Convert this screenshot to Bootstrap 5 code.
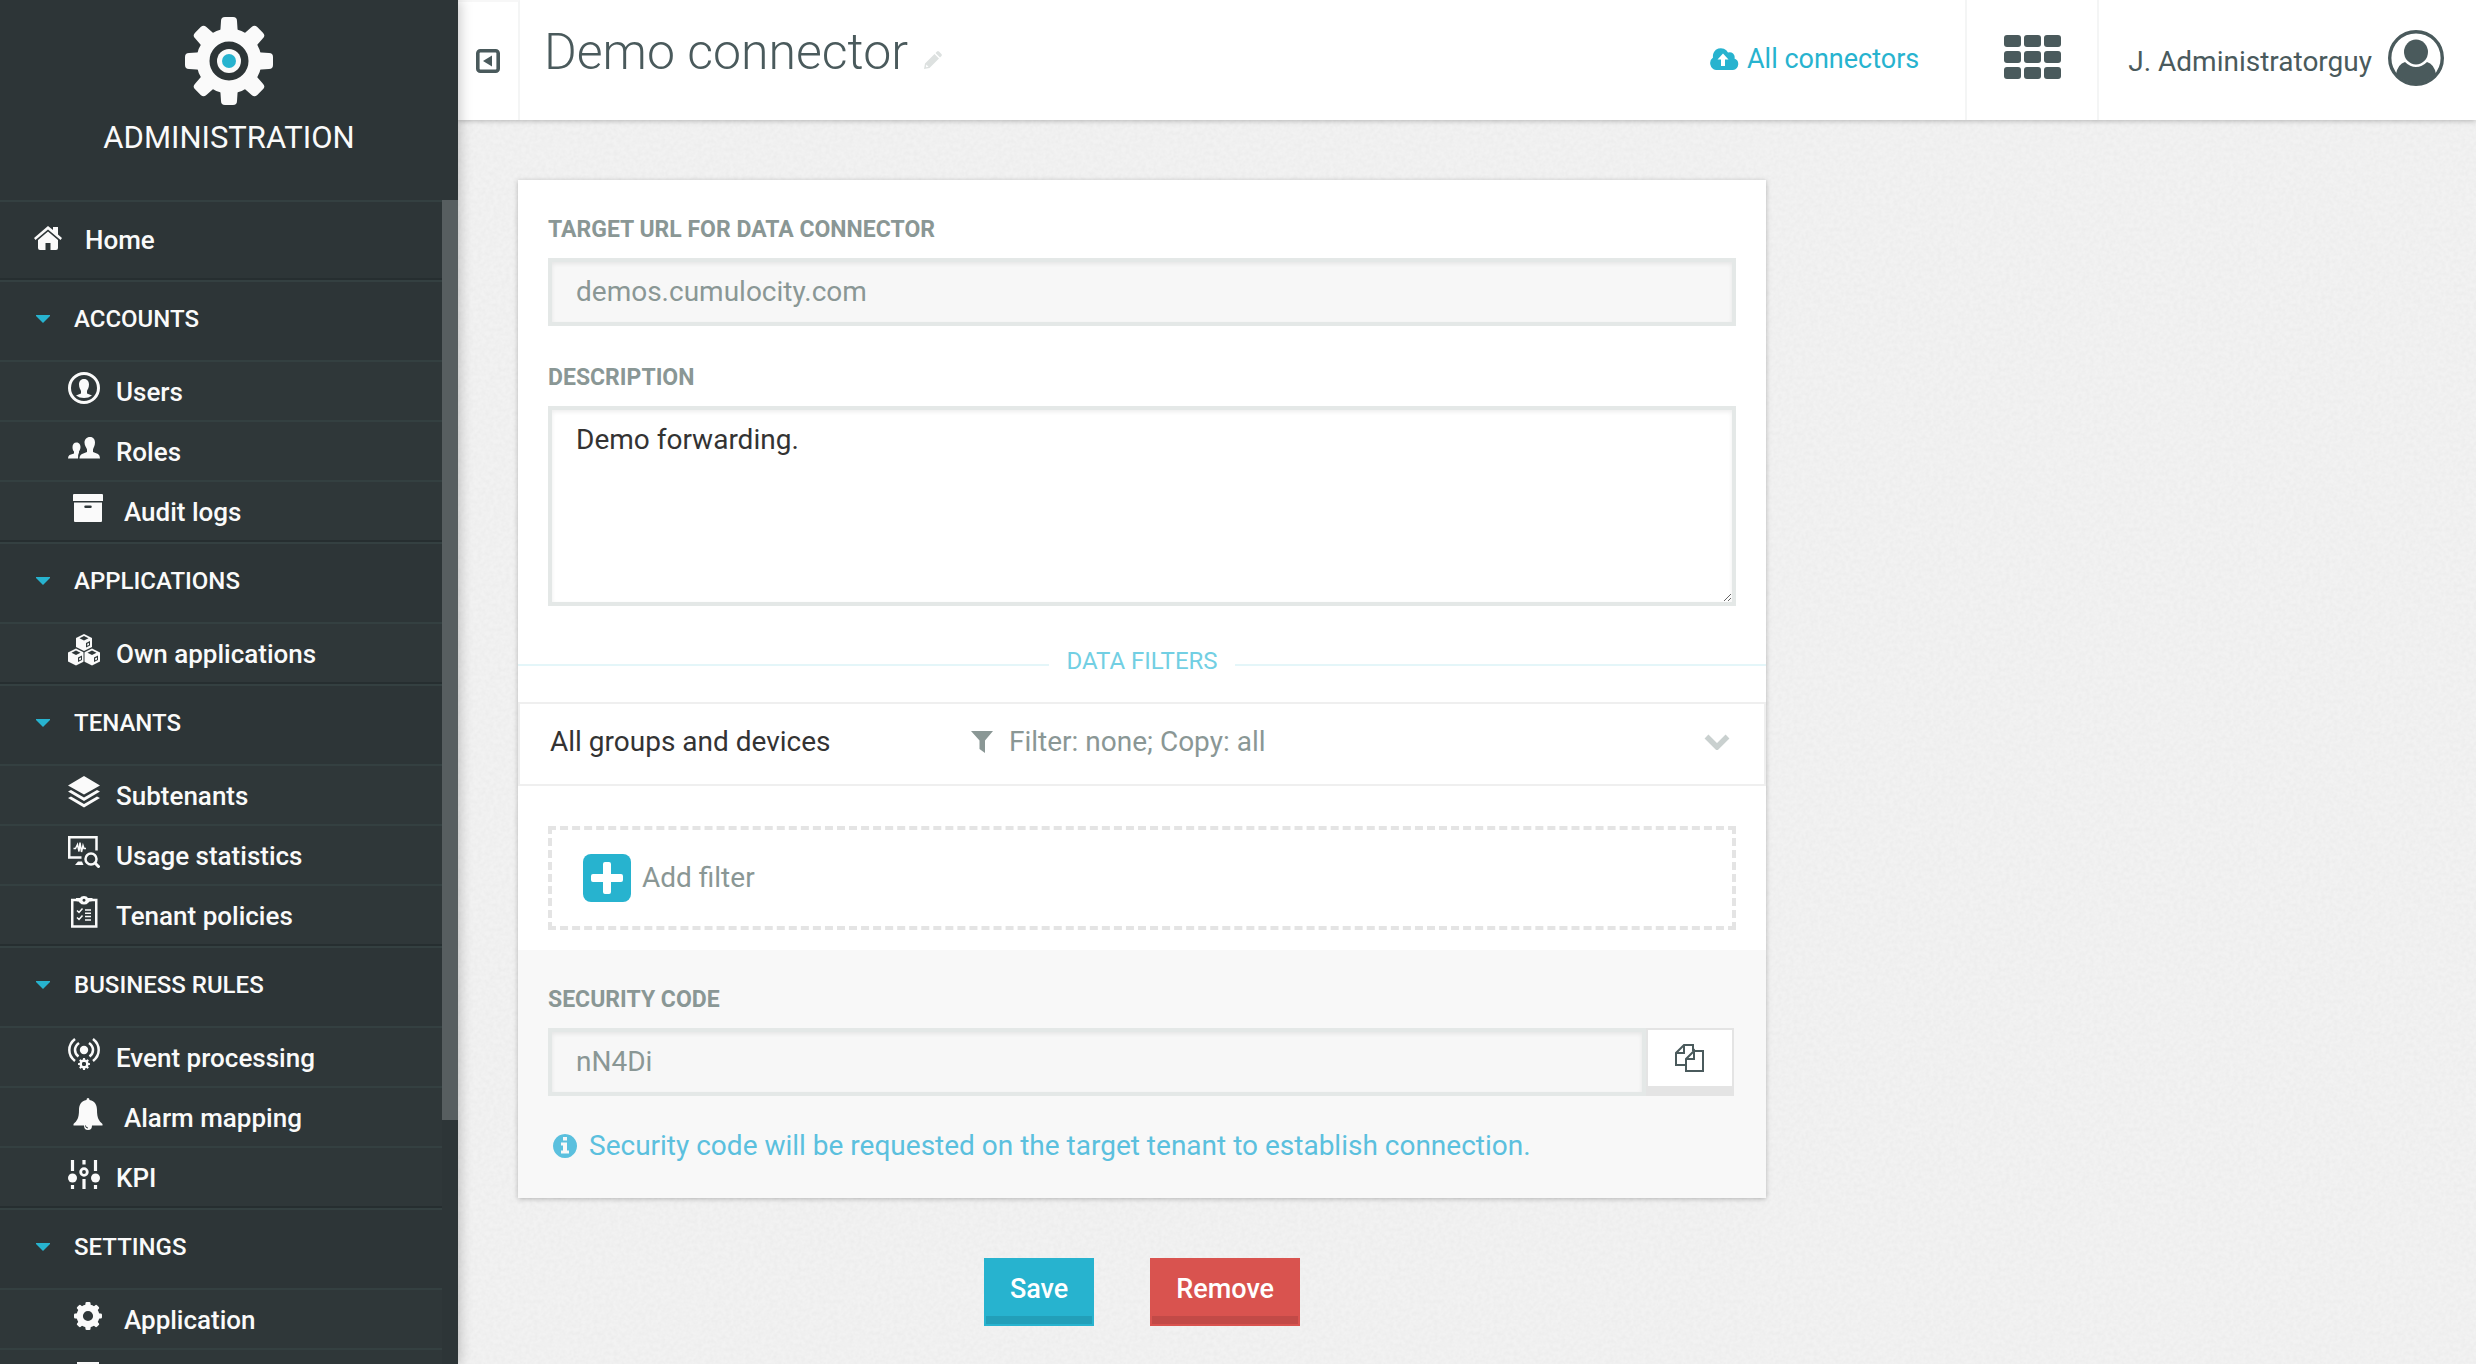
<!DOCTYPE html>
<html lang="en">
<head>
<meta charset="utf-8">
<meta name="viewport" content="width=device-width, initial-scale=1">
<title>Demo connector - Administration</title>
<link href="https://cdn.jsdelivr.net/npm/bootstrap@5.3.0/dist/css/bootstrap.min.css" rel="stylesheet">
<style>
  :root { --brand: #27b3cf; --ink: #4a5a5c; --muted: #8a9795; --edge: #e4e8e7; }
  body { font-family: Roboto, "Liberation Sans", sans-serif; font-size: 28px; line-height: 40px; color: #333; background: #f1f1f1; }
  svg { flex: none; display: block; }
  svg:not([fill]) { fill: currentColor; }
  a { text-decoration: none; }

  /* sidebar */
  .side { width: 458px; background: #2d3537; color: #fafafa; box-shadow: 2px 0 12px rgba(0,0,0,.22); z-index: 3; }
  .side a, .side button { color: inherit; }
  .side-brand { height: 200px; padding-top: 17px; font-size: 31px; }
  .side-brand span { line-height: 40px; margin-top: 13px; }
  .side-nav { font-size: 26px; font-weight: 500; min-width: 0; }
  .nav-home { height: 80px; padding: 0 0 0 34px; gap: 23px; border-top: 2px solid #344041; border-bottom: 2px solid #262e30; }
  .nav-home svg { margin-bottom: 4px; }
  .nav-group { border-bottom: 2px solid #262e30; }
  .nav-head { height: 80px; padding: 0 0 5px 36px; gap: 24px; font-size: 24px; text-transform: uppercase; border: 0; border-top: 2px solid #344041; background: none; width: 100%; font-weight: 500; }
  .nav-item-row { height: 60px; padding: 2px 0 0 68px; gap: 16px; background: #2f3739; border-top: 2px solid #344041; }
  .nav-item-row svg { margin-bottom: 8px; }
  .scroll-track { width: 16px; flex: none; }
  .scroll-thumb { height: 79%; background: #575e60; }

  /* top bar */
  .topbar { height: 120px; background: #fff; color: var(--ink); box-shadow: 0 1px 5px rgba(0,0,0,.25); z-index: 2; }
  .collapse-btn { width: 62px; border: 0; border-right: 2px solid #f4f5f5; border-top: 2px solid #f7f7f7; background: none; color: var(--ink); }
  .page-title { font-size: 50px; font-weight: 300; line-height: 60px; }
  .plain-btn { border: 0; background: none; padding: 0; color: inherit; }
  .topbar .link-all { color: var(--brand); padding-right: 46px; padding-bottom: 2px; font-size: 27px; }
  .apps-btn { width: 134px; border: 0; border-left: 2px solid #f4f5f5; border-right: 2px solid #f4f5f5; background: none; color: var(--ink); padding-bottom: 8px; }
  .user-box { padding: 0 32px 0 29px; color: var(--ink); }

  /* content */
  .work { background-color: #f2f2f2; background-image: url("data:image/svg+xml,%3Csvg xmlns='http://www.w3.org/2000/svg' width='300' height='300'%3E%3Cfilter id='n'%3E%3CfeTurbulence type='fractalNoise' baseFrequency='.25' numOctaves='2' stitchTiles='stitch'/%3E%3CfeColorMatrix values='0 0 0 0 0 0 0 0 0 0 0 0 0 0 0 .04 0 0 0 -.012'/%3E%3C/filter%3E%3Crect width='300' height='300' filter='url(%23n)'/%3E%3C/svg%3E"); padding: 60px 26px 0 30px; }
  .work .row { --bs-gutter-x: 60px; margin: 0; }
  .panel { background: #fff; box-shadow: 0 1px 5px rgba(0,0,0,.25); }
  .panel-sec { padding: 36px 30px 0; }
  .panel-foot { background: #f8f8f8; padding: 36px 30px 32px; margin-top: 20px; }
  .cap-label { display: block; font-size: 23px; line-height: 28px; font-weight: 700; color: var(--muted); text-transform: uppercase; margin-bottom: 14px; }
  .box-input + .cap-label { margin-top: 38px; }
  .box-input { border: 4px solid var(--edge); border-radius: 0; height: 68px; padding: 0 24px 2px; font-size: 28px; box-shadow: inset 0 2px 4px rgba(0,0,0,.07); color: #333; }
  .box-input:read-only { background: #f7f7f7; color: var(--muted); }
  textarea.box-input { height: 200px; padding: 10px 24px; line-height: 40px; resize: vertical; }
  .rule-title { margin-top: 41px; margin-bottom: 27px; gap: 17px; line-height: 28px; font-size: 24px; color: #72cfe3; }
  .rule-title::before, .rule-title::after { content: ""; flex: 1; height: 2px; margin-top: 8px; background: #e4f6f9; }
  .filter-row { width: 100%; height: 84px; border: 2px solid #efefef; background: #fff; padding: 0 34px 4px 30px; color: #333; text-align: left; }
  .filter-row .name { width: 421px; }
  .filter-row .info { color: var(--muted); }
  .add-zone { height: 104px; border: 4px dashed #e4e4e4; background: #fff; margin: 40px 30px 0; padding: 0 31px; }
  .add-zone button { gap: 11px; color: var(--muted); }
  .plus { width: 48px; height: 48px; border-radius: 8px; background: var(--brand); color: #fff; }
  .copy-btn { width: 88px; margin-right: 2px; border: 2px solid #e4e4e4; border-bottom-width: 10px; background: #fff; color: var(--ink); padding: 0; }
  .hint { margin-top: 30px; padding-left: 5px; gap: 12px; color: #5bc0de; }
  .form-actions { gap: 56px; margin-top: 60px; }
  .act { height: 68px; border: 2px solid; border-radius: 0; padding: 0 24px 6px; font-size: 27px; line-height: 48px; font-weight: 500; color: #fff; }
  .act-save { background: var(--brand); border-color: var(--brand); box-shadow: inset 0 -8px #229fb9; }
  .act-remove { background: #d9534f; border-color: #d9534f; box-shadow: inset 0 -8px #c24a47; }
  .act:hover { color: #fff; }
</style>
</head>
<body>
<svg width="0" height="0" class="position-absolute" aria-hidden="true">
  <defs>
    <path id="tooth" d="M-9 -25 L-8 -40 Q-8 -44 -4 -44 H4 Q8 -44 8 -40 L9 -25 Z"/>
    <g id="teeth">
      <use href="#tooth"/><use href="#tooth" transform="rotate(45)"/><use href="#tooth" transform="rotate(90)"/><use href="#tooth" transform="rotate(135)"/>
      <use href="#tooth" transform="rotate(180)"/><use href="#tooth" transform="rotate(225)"/><use href="#tooth" transform="rotate(270)"/><use href="#tooth" transform="rotate(315)"/>
    </g>
    <g id="cube">
      <path d="M8 0 L16 4 V13 L8 17 L0 13 V4 Z"/>
      <path d="M8 2 L12.500 4.300 L8 6.500 L3.500 4.300 Z M10 9 L14 7 V11.500 L10 13.500 Z" fill="#2f3739"/>
      <path d="M11.200 9.800 L13 8.900 V10.900 L11.200 11.800 Z"/>
    </g>
  </defs>
</svg>

<div class="d-flex vh-100 overflow-hidden">
  <aside class="side d-flex flex-column flex-shrink-0">
    <div class="side-brand d-flex flex-column align-items-center flex-shrink-0">
      <svg width="88" height="88" viewBox="-44 -44 88 88"><use href="#teeth"/><circle r="26" fill="none" stroke="currentColor" stroke-width="13"/><circle r="12"/><circle r="7" fill="#27b3cf"/></svg>
      <span>ADMINISTRATION</span>
    </div>
    <div class="d-flex flex-grow-1 overflow-hidden">
      <nav class="side-nav flex-grow-1" aria-label="Main">
        <a href="#" class="nav-home d-flex align-items-center">
          <svg width="28" height="24" viewBox="0 0 28 24"><path d="M14 0 L19 4 V1 H24 V8.500 L28 12 L26.500 14 L14 3.600 L1.500 14 L0 12 Z"/><path d="M14 5.500 L24 14 V22 Q24 24 22 24 H16.500 V17 H11.500 V24 H6 Q4 24 4 22 V14 Z"/></svg>
          <span>Home</span>
        </a>

        <div class="nav-group">
          <button type="button" class="nav-head d-flex align-items-center"><svg width="14" height="8" viewBox="0 0 14 8" fill="#27b3cf"><path d="M0 0 H14 V1 L7 8 L0 1 Z"/></svg><span>Accounts</span></button>
          <a href="#" class="nav-item-row d-flex align-items-center">
            <svg width="32" height="32" viewBox="0 0 32 32"><circle cx="16" cy="16" r="14.500" fill="none" stroke="currentColor" stroke-width="3"/><path d="M16 7 C19.500 7 21 9.500 21 12.500 C21 16 19.500 17.500 19 19 V21.500 L24 23.500 Q20.500 26 16 26 Q11.500 26 8 23.500 L13 21.500 V19 C12.500 17.500 11 16 11 12.500 C11 9.500 12.500 7 16 7 Z"/></svg><span>Users</span></a>
          <a href="#" class="nav-item-row d-flex align-items-center">
            <svg width="32" height="32" viewBox="0 0 32 32"><path d="M22 5 C25.500 5 27 7.500 27 10.500 C27 14 25.500 15.500 25 17.500 V20 L30 22 Q32 23 32 26.500 H11.500 Q11.500 23 14 22 L19 20 V17.500 C18.500 15.500 16.500 14 16.500 10.500 C16.500 7.500 18.500 5 22 5 Z M8.500 10.500 C11.500 10.500 12.500 13 12.500 15 C12.500 17 11.500 18.500 11 19.500 V20.500 Q10 22 10 26.500 H0 Q0 24 1.500 23 L6 21.500 V19.500 C5 18.500 4.500 17 4.500 15 C4.500 12.500 6 10.500 8.500 10.500 Z"/></svg><span>Roles</span></a>
          <a href="#" class="nav-item-row d-flex align-items-center">
            <svg width="40" height="32" viewBox="0 0 40 32"><path fill-rule="evenodd" d="M6 2 H34 Q35 2 35 3 V9 H5 V3 Q5 2 6 2 Z M6 10.500 H34 V29 Q34 30 33 30 H7 Q6 30 6 29 Z M17.500 13.500 a1 1 0 0 0 0 2.500 H22.500 a1 1 0 0 0 0 -2.500 Z"/></svg><span>Audit logs</span></a>
        </div>

        <div class="nav-group">
          <button type="button" class="nav-head d-flex align-items-center"><svg width="14" height="8" viewBox="0 0 14 8" fill="#27b3cf"><path d="M0 0 H14 V1 L7 8 L0 1 Z"/></svg><span>Applications</span></button>
          <a href="#" class="nav-item-row d-flex align-items-center">
            <svg width="32" height="32" viewBox="0 0 32 32"><use href="#cube" x="8" y="0"/><use href="#cube" x="0" y="14.500"/><use href="#cube" x="16" y="14.500"/><path d="M16 18 V30" stroke="#2f3739" stroke-width="1"/></svg><span>Own applications</span></a>
        </div>

        <div class="nav-group">
          <button type="button" class="nav-head d-flex align-items-center"><svg width="14" height="8" viewBox="0 0 14 8" fill="#27b3cf"><path d="M0 0 H14 V1 L7 8 L0 1 Z"/></svg><span>Tenants</span></button>
          <a href="#" class="nav-item-row d-flex align-items-center">
            <svg width="32" height="32" viewBox="0 0 32 32"><path d="M16 0 L32 9.500 L16 18.500 L0 9.500 Z M0 15.500 L3 14 L16 21.500 L29 14 L32 15.500 L16 25 Z M0 22 L3 20.500 L16 28 L29 20.500 L32 22 L16 31.500 Z"/></svg><span>Subtenants</span></a>
          <a href="#" class="nav-item-row d-flex align-items-center">
            <svg width="32" height="32" viewBox="0 0 32 32"><g fill="none" stroke="currentColor" stroke-width="2.500"><path d="M13.500 21.500 H1.250 V1.250 H28.500 V14.500"/><circle cx="23" cy="23" r="5.500"/><path d="M27 27 L31.500 31.500" stroke-width="3"/><path d="M5.500 12.500 H7.500 L9.500 8.500 L11 15.500 L12 6.500 L13.500 16 L15 9.500 L16 12.500 H18" stroke-width="1.500"/></g><path d="M10 25.500 H14 L15.500 29 H7 Z"/></svg><span>Usage statistics</span></a>
          <a href="#" class="nav-item-row d-flex align-items-center">
            <svg width="32" height="32" viewBox="0 0 32 32"><path fill="none" stroke="currentColor" stroke-width="2.500" d="M10 4 H4.250 V30.500 H28.250 V4 H22"/><path fill-rule="evenodd" d="M8 2 H12 Q13 0 16 0 Q19 0 20 2 H24.500 V5 Q21 5 20 7 Q19 8.500 16 8.500 Q13 8.500 12 7 Q11 5 8 5 Z M16 2.800 a1.500 1.500 0 1 0 .01 0 Z"/><path fill="none" stroke="currentColor" stroke-width="1.500" d="M9 14.500 L11 16.500 L14.500 12.500 M9 21.500 L11 23.500 L14.500 19.500 M17 14 H23 M17 17.300 H23 M17 20.600 H23 M17 24 H23"/></svg><span>Tenant policies</span></a>
        </div>

        <div class="nav-group">
          <button type="button" class="nav-head d-flex align-items-center"><svg width="14" height="8" viewBox="0 0 14 8" fill="#27b3cf"><path d="M0 0 H14 V1 L7 8 L0 1 Z"/></svg><span>Business rules</span></button>
          <a href="#" class="nav-item-row d-flex align-items-center">
            <svg width="32" height="32" viewBox="0 0 32 32"><circle cx="16" cy="12" r="4.200"/><g fill="none" stroke="currentColor" stroke-width="2.500"><path d="M7 1 Q1.300 5.500 1.300 12 Q1.300 18.500 7 23 M25 1 Q30.700 5.500 30.700 12 Q30.700 18.500 25 23 M11 5 Q7 8 7 12 Q7 16 10.500 18.500 M21 5 Q25 8 25 12 Q25 16 21.500 18.500"/></g><g transform="translate(16 26) scale(.136)"><use href="#teeth"/><circle r="24" fill="none" stroke="currentColor" stroke-width="18"/></g><circle cx="16" cy="26" r="2" fill="#2f3739"/></svg><span>Event processing</span></a>
          <a href="#" class="nav-item-row d-flex align-items-center">
            <svg width="40" height="32" viewBox="0 0 40 32"><path d="M20 0 Q21.500 0 21.500 2 C27 3 29 7 29 12 C29 20 31 23 34.500 26 V27.500 H24 Q24 32 20 32 Q16 32 16 27.500 H5.500 V26 C9 23 11 20 11 12 C11 7 13 3 18.500 2 Q18.500 0 20 0 Z"/><path d="M17.500 27.500 Q17.500 30 20 30" fill="none" stroke="#2f3739"/></svg><span>Alarm mapping</span></a>
          <a href="#" class="nav-item-row d-flex align-items-center">
            <svg width="32" height="32" viewBox="0 0 32 32"><circle cx="4.500" cy="20" r="4.500"/><circle cx="27.500" cy="20" r="4.500"/><circle cx="16" cy="14" r="3.300" fill="none" stroke="currentColor" stroke-width="2.800"/><path d="M4.500 2 V13 M4.500 27 V31 M27.500 2 V13 M27.500 27 V31 M16 2 V6.500 M16 21 V31" stroke="currentColor" stroke-width="3.200"/></svg><span>KPI</span></a>
        </div>

        <div class="nav-group">
          <button type="button" class="nav-head d-flex align-items-center"><svg width="14" height="8" viewBox="0 0 14 8" fill="#27b3cf"><path d="M0 0 H14 V1 L7 8 L0 1 Z"/></svg><span>Settings</span></button>
          <a href="#" class="nav-item-row d-flex align-items-center">
            <svg width="40" height="32" viewBox="0 0 40 32"><g transform="translate(20 16) scale(.318)"><use href="#teeth"/><circle r="26" fill="none" stroke="currentColor" stroke-width="20"/></g></svg><span>Application</span></a>
          <a href="#" class="nav-item-row d-flex align-items-center" aria-label="More settings">
            <svg width="40" height="32" viewBox="0 0 40 32"><path d="M9 2 H31 V30 H9 Z"/></svg></a>
        </div>
      </nav>
      <div class="scroll-track"><div class="scroll-thumb"></div></div>
    </div>
  </aside>

  <div class="d-flex flex-column flex-grow-1">
    <header class="topbar d-flex flex-shrink-0">
      <button type="button" class="collapse-btn d-flex align-items-center justify-content-center p-0" aria-label="Collapse menu">
        <svg width="24" height="24" viewBox="0 0 24 24"><rect x="1.800" y="1.800" width="20.400" height="20.400" rx="2.500" fill="none" stroke="currentColor" stroke-width="3.600"/><path d="M16 6.500 V17.500 L7 12 Z"/></svg>
      </button>
      <div class="d-flex align-items-center flex-grow-1 ps-4 pb-3">
        <h1 class="page-title m-0">Demo connector</h1>
        <button type="button" class="plain-btn ms-3 mt-3" aria-label="Rename">
          <svg width="18" height="18" viewBox="0 0 18 18" fill="#dde1e0"><path d="M0 18 L1 12.500 L10.500 3 L15 7.500 L5.500 17 Z M11.500 2 L13 .5 Q14 -.3 15 .6 L17.400 3 Q18.300 4 17.500 5 L16 6.500 Z"/><path d="M2.200 13.500 L4.500 15.800 L2 16.300 Z" fill="#fff"/></svg>
        </button>
      </div>
      <a href="#" class="link-all d-flex align-items-center gap-2">
        <svg width="30" height="22" viewBox="0 0 30 22"><path fill-rule="evenodd" d="M7 22 A7 7 0 0 1 4 9.500 A8 8 0 0 1 19 4.500 A5 5 0 0 1 25.500 10.500 A6 6 0 0 1 24 22 Z M14 5.500 L8.500 11.500 H12 V18 H16 V11.500 H19.500 Z"/></svg>
        <span>All connectors</span>
      </a>
      <button type="button" class="apps-btn d-flex align-items-center justify-content-center" aria-label="Applications">
        <svg width="57" height="44" viewBox="0 0 57 44"><g id="dots"><rect width="17" height="12" rx="3"/><rect x="20" width="17" height="12" rx="3"/><rect x="40" width="17" height="12" rx="3"/></g><use href="#dots" y="16"/><use href="#dots" y="32"/></svg>
      </button>
      <a href="#" class="user-box d-flex align-items-center gap-3">
        <span class="pt-1">J. Administratorguy</span>
        <svg class="mb-1" width="56" height="56" viewBox="0 0 56 56"><circle cx="28" cy="28" r="26.300" fill="none" stroke="currentColor" stroke-width="3.400"/><ellipse cx="28" cy="22" rx="12" ry="12.500"/><path d="M8 44 Q10 34 17 32 Q22 37 28 37 Q34 37 39 32 Q46 34 48 44 A26 26 0 0 1 8 44 Z"/></svg>
      </a>
    </header>

    <main class="work flex-grow-1">
      <div class="row">
        <div class="col-8">
          <form onsubmit="return false">
            <div class="panel">
              <div class="panel-sec">
                <label class="cap-label" for="url">Target URL for data connector</label>
                <input id="url" class="form-control box-input" type="text" value="demos.cumulocity.com" readonly>
                <label class="cap-label" for="desc">Description</label>
                <textarea id="desc" class="form-control box-input">Demo forwarding.</textarea>
              </div>
              <div class="rule-title d-flex align-items-center">DATA FILTERS</div>
              <button type="button" class="filter-row d-flex align-items-center">
                <span class="name">All groups and devices</span>
                <span class="info d-flex align-items-center flex-grow-1">
                  <svg class="me-3" width="22" height="22" viewBox="0 0 22 22"><path d="M0 0 H22 L14 9.500 V22 L8.500 18 V9.500 Z"/></svg>Filter: none; Copy: all
                </span>
                <svg width="26" height="16" viewBox="0 0 26 16"><path d="M2.500 2.500 L13 13 L23.500 2.500" fill="none" stroke="#c9d0cf" stroke-width="5.500"/></svg>
              </button>
              <div class="add-zone d-flex align-items-center">
                <button type="button" class="plain-btn d-flex align-items-center">
                  <span class="plus d-flex align-items-center justify-content-center"><svg width="32" height="32" viewBox="0 0 32 32"><path d="M14 0 H18 Q20 0 20 2 V12 H30 Q32 12 32 14 V18 Q32 20 30 20 H20 V30 Q20 32 18 32 H14 Q12 32 12 30 V20 H2 Q0 20 0 18 V14 Q0 12 2 12 H12 V2 Q12 0 14 0 Z"/></svg></span>
                  Add filter
                </button>
              </div>
              <div class="panel-foot">
                <label class="cap-label" for="code">Security code</label>
                <div class="d-flex">
                  <input id="code" class="form-control box-input" type="text" value="nN4Di" readonly>
                  <button type="button" class="copy-btn d-flex align-items-center justify-content-center flex-shrink-0" aria-label="Copy code">
                    <svg width="29" height="28" viewBox="0 0 29 28" fill="none" stroke="currentColor" stroke-width="2"><path d="M11 21 H1 V9 L9 1 H18 V7 M9 1 V9 H1"/><path d="M20 7 H28 V27 H11 V15 L19 7 V15 H11"/></svg>
                  </button>
                </div>
                <div class="hint d-flex align-items-center">
                  <svg width="24" height="24" viewBox="0 0 24 24"><path fill-rule="evenodd" d="M12 0 a12 12 0 1 0 .01 0 Z M10 3 H14 V6.500 H10 Z M8 8.500 H14 V16.500 H16 V19.500 H8 V16.500 H10 V11.500 H8 Z"/></svg>
                  <span>Security code will be requested on the target tenant to establish connection.</span>
                </div>
              </div>
            </div>
            <div class="form-actions d-flex justify-content-center">
              <button type="submit" class="btn act act-save">Save</button>
              <button type="button" class="btn act act-remove">Remove</button>
            </div>
          </form>
        </div>
      </div>
    </main>
  </div>
</div>
<script src="https://cdn.jsdelivr.net/npm/bootstrap@5.3.0/dist/js/bootstrap.bundle.min.js"></script>
</body>
</html>
